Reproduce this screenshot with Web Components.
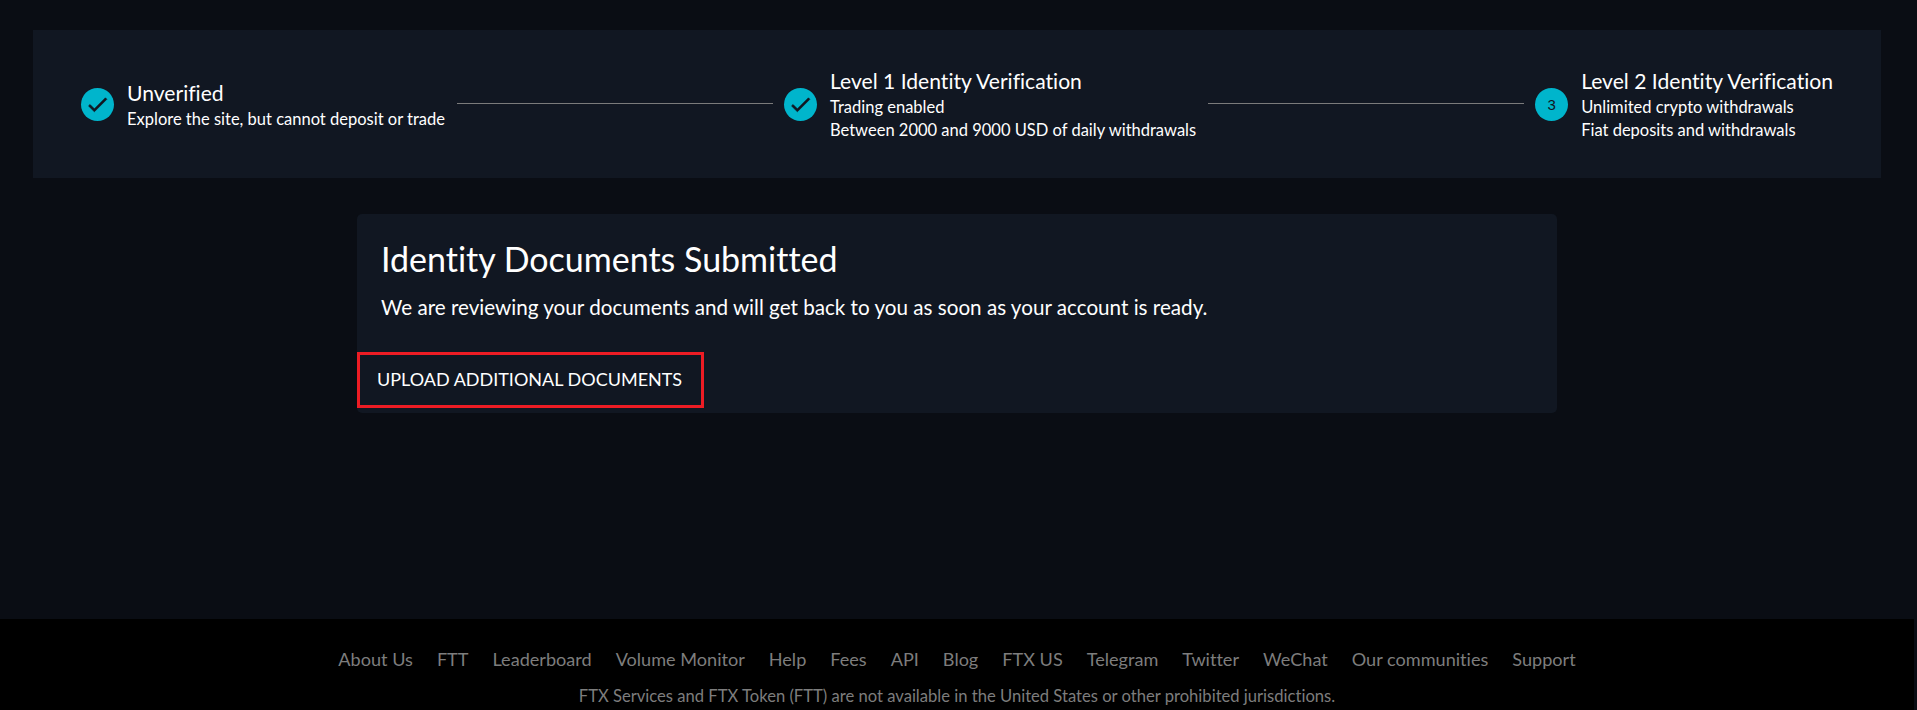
<!DOCTYPE html>
<html>
<head>
<meta charset="utf-8">
<title>Identity Verification</title>
<style>
  html, body { margin: 0; height: 100%; background: #0a0d14; }
  body { font-family: Lato, sans-serif; color: #fff; font-variant-ligatures: no-common-ligatures; }
</style>
</head>
<body>
<kyc-page>
  <kyc-stepper>
    <kyc-step done heading="Unverified">
      <div>Explore the site, but cannot deposit or trade</div>
    </kyc-step>
    <kyc-step done heading="Level 1 Identity Verification">
      <div>Trading enabled</div>
      <div>Between 2000 and 9000 USD of daily withdrawals</div>
    </kyc-step>
    <kyc-step number="3" heading="Level 2 Identity Verification">
      <div>Unlimited crypto withdrawals</div>
      <div>Fiat deposits and withdrawals</div>
    </kyc-step>
  </kyc-stepper>
  <kyc-status heading="Identity Documents Submitted">
    We are reviewing your documents and will get back to you as soon as your account is ready.
    <span slot="action">UPLOAD ADDITIONAL DOCUMENTS</span>
  </kyc-status>
  <site-footer slot="footer"></site-footer>
</kyc-page>

<script>
class KycPage extends HTMLElement {
  constructor() {
    super()
    this.attachShadow({mode: 'open'})
    this.shadowRoot.innerHTML = `
      <style>
        :host { display: flex; flex-direction: column; height: 710px; width: 1914px; overflow: hidden; }
        .main { flex: 1; display: flex; flex-direction: column; align-items: center; padding: 30px 33px 0; box-sizing: border-box; }
      </style>
      <div class="main"><slot></slot></div>
      <slot name="footer"></slot>
    `
  }
}

class KycStepper extends HTMLElement {
  constructor() {
    super()
    this.attachShadow({mode: 'open'})
    this.shadowRoot.innerHTML = `
      <style>
        :host { display: flex; align-items: center; align-self: stretch; height: 148px; padding: 0 48px; box-sizing: border-box; background: #111722; margin-bottom: 36px; }
      </style>
      <slot></slot>
    `
  }
}

class KycStep extends HTMLElement {
  constructor() {
    super()
    this.attachShadow({mode: 'open'})
    const check = `<svg width="25" height="25" viewBox="0 0 24 24"><path d="M9 16.17 4.83 12l-1.42 1.41L9 19 21 7l-1.41-1.41z" fill="#111722" stroke="#111722" stroke-width=".6"/></svg>`
    const first = !this.previousElementSibling
    this.shadowRoot.innerHTML = `
      <style>
        :host { display: flex; align-items: center; flex: ${first ? '0 1 auto' : '1 1 auto'}; }
        .line { flex: 1; height: 1px; background: #7b7b7b; margin: 0 11px 2px 12px; }
        .dot { flex: none; width: 33px; height: 33px; border-radius: 50%; background: #00b5cc; display: flex; align-items: center; justify-content: center; color: #111722; font: 15px "Liberation Sans", sans-serif; margin-right: 13px; }
        .num { margin-top: 1px; }
        .label { padding-top: ${first ? '3px' : '1px'}; }
        .title { font-size: 21.1px; line-height: 28px; margin: -1px 0 1px; }
        .text { font-size: 16.5px; line-height: 23px; }
      </style>
      ${first ? '' : '<div class="line"></div>'}
      <div class="dot">${this.hasAttribute('done') ? check : `<span class="num">${this.getAttribute('number')}</span>`}</div>
      <div class="label">
        <div class="title">${this.getAttribute('heading')}</div>
        <div class="text"><slot></slot></div>
      </div>
    `
  }
}

class KycStatus extends HTMLElement {
  constructor() {
    super()
    this.attachShadow({mode: 'open'})
    this.shadowRoot.innerHTML = `
      <style>
        :host { display: block; width: 1200px; height: 199px; box-sizing: border-box; background: #111722; border-radius: 5px; }
        .body { padding: 24px 24px 0; }
        h4 { margin: 0 0 12px; font-size: 34px; line-height: 42px; font-weight: 400; }
        p { margin: 0; font-size: 20.65px; line-height: 30px; }
        .action { display: inline-flex; align-items: center; height: 56px; box-sizing: border-box; margin-top: 30px; padding: 0 19px 2px 17px; border: 3px solid #ed1c24; font-size: 18px; }
      </style>
      <div class="body">
        <h4>${this.getAttribute('heading')}</h4>
        <p><slot></slot></p>
      </div>
      <div class="action"><slot name="action"></slot></div>
    `
  }
}

class SiteFooter extends HTMLElement {
  constructor() {
    super()
    this.attachShadow({mode: 'open'})
    const links = ['About Us', 'FTT', 'Leaderboard', 'Volume Monitor', 'Help', 'Fees', 'API', 'Blog', 'FTX US', 'Telegram', 'Twitter', 'WeChat', 'Our communities', 'Support']
    this.shadowRoot.innerHTML = `
      <style>
        :host { display: block; height: 91px; flex: none; background: #000; color: #7d7d7d; text-align: center; overflow: hidden; }
        nav { display: flex; justify-content: center; gap: 24px; padding-top: 28px; line-height: 25px; font-size: 18.1px; }
        p { margin: 12px 0 0; line-height: 24px; font-size: 16.6px; }
      </style>
      <nav>${links.map(l => `<span>${l}</span>`).join('')}</nav>
      <p>FTX Services and FTX Token (FTT) are not available in the United States or other prohibited jurisdictions.</p>
    `
  }
}

customElements.define('kyc-page', KycPage)
customElements.define('kyc-stepper', KycStepper)
customElements.define('kyc-step', KycStep)
customElements.define('kyc-status', KycStatus)
customElements.define('site-footer', SiteFooter)
</script>
</body>
</html>
